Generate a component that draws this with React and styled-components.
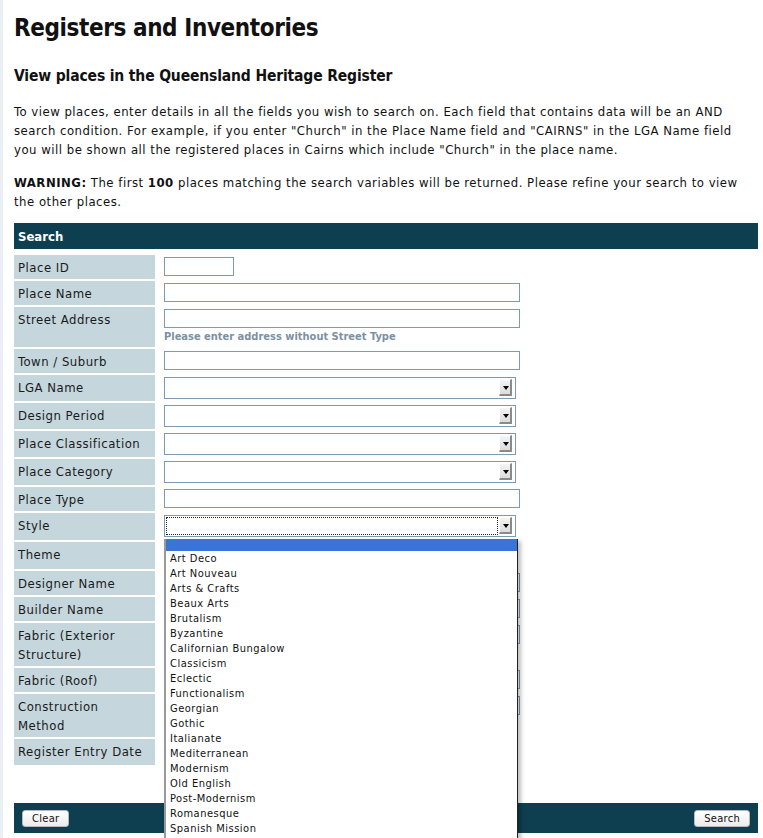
import React from 'react';
import styled, { createGlobalStyle } from 'styled-components';

const GlobalStyle = createGlobalStyle`
  html, body { margin: 0; padding: 0; background: #fff; }
  body {
    font-family: "DejaVu Sans Condensed", "DejaVu Sans", sans-serif;
    color: #111;
  }
`;

const Page = styled.div`
  border-left: 3px solid #e9eff3;
  padding: 12px 5px 6px 11px;
  min-height: 820px;
`;

const Title = styled.h1`
  margin: 0;
  font-size: 24px;
  line-height: 32px;
  font-weight: bold;
  letter-spacing: -0.4px;
`;

const SubTitle = styled.h2`
  margin: 22px 0 0;
  font-size: 15.5px;
  line-height: 20px;
  font-weight: bold;
  letter-spacing: -0.15px;
`;

const Para = styled.p`
  margin: ${p => p.$top}px 0 0;
  font-size: 13px;
  line-height: 19px;
  letter-spacing: 0.5px;
  white-space: nowrap;
`;

const Bar = styled.div`
  margin-top: 12px;
  height: 26px;
  background: #0e3f51;
  color: #fff;
  font-weight: bold;
  font-size: 13px;
  line-height: 27px;
  padding: 0 4px;
`;

const Form = styled.div`
  display: grid;
  grid-template-columns: 141px 1fr;
  row-gap: 2px;
  margin-top: 6px;
`;

const Label = styled.div`
  background: #c5d6dd;
  font-size: 13px;
  line-height: 19px;
  letter-spacing: 0.5px;
  padding: 3px 4px 2px;
  color: #1a1a1a;
  white-space: pre-line;
`;

const Field = styled.div`
  position: relative;
  padding: 2px 9px ${p => p.$pb}px;
`;

const TextBox = styled.input`
  display: block;
  box-sizing: border-box;
  width: ${p => p.$w || 356}px;
  height: ${p => p.$h || 19}px;
  margin: 0;
  border: 1px solid #7d9ab2;
  background: #fff;
  padding: 0 3px;
  font: inherit;
  outline: none;
`;

const SelectBox = styled.div`
  position: relative;
  box-sizing: border-box;
  width: 352px;
  height: 22px;
  border: 1px solid #7d9ab2;
  background: #fff;
  &::after {
    content: "";
    display: ${p => (p.$focus ? 'block' : 'none')};
    position: absolute;
    left: 1px;
    top: 1px;
    right: 17px;
    bottom: 1px;
    border: 1px dotted #222;
  }
`;

const Arrow = styled.span`
  position: absolute;
  right: 3px;
  top: 1px;
  width: 13px;
  height: 17px;
  box-sizing: border-box;
  background: linear-gradient(#f4f4f4, #dcdcdc);
  border-right: 2px solid #8a8a8a;
  border-bottom: 2px solid #8a8a8a;
  border-top: 1px solid #fff;
  border-left: 1px solid #fff;
  &::before {
    content: "";
    position: absolute;
    left: 3px;
    top: 6px;
    border-left: 3px solid transparent;
    border-right: 3px solid transparent;
    border-top: 4px solid #000;
  }
`;

const Hint = styled.div`
  font-size: 11px;
  font-weight: bold;
  line-height: 17px;
  color: #7b91a4;
`;

const ListBox = styled.div`
  position: absolute;
  z-index: 5;
  left: 9px;
  top: 26px;
  width: 351px;
  background: #fff;
  border-left: 2px solid #9a9a9a;
  border-right: 1px solid #222;
  box-shadow: 3px 2px 4px rgba(0, 0, 0, 0.25);
  padding-bottom: 10px;
`;

const Option = styled.div`
  height: ${p => (p.$blank ? 12 : 15)}px;
  line-height: 15px;
  font-size: 11px;
  letter-spacing: 0.5px;
  padding: 0 4px;
  background: ${p => (p.$active ? '#3875d7' : 'transparent')};
  color: #111;
  white-space: nowrap;
`;

const Footer = styled.div`
  margin-top: 38px;
  height: 30px;
  background: #0e3f51;
  display: flex;
  align-items: center;
  justify-content: space-between;
  padding: 0 8px;
`;

const Button = styled.button`
  height: 17px;
  padding: 0 9px;
  border: 1px solid #b8b8b8;
  border-radius: 3px;
  background: linear-gradient(#ffffff, #ececec);
  font-family: "DejaVu Sans Condensed", "DejaVu Sans", sans-serif;
  font-size: 11px;
  letter-spacing: 0.3px;
  line-height: 15px;
  color: #111;
`;

const styles = [
  'Art Deco', 'Art Nouveau', 'Arts & Crafts', 'Beaux Arts', 'Brutalism', 'Byzantine',
  'Californian Bungalow', 'Classicism', 'Eclectic', 'Functionalism', 'Georgian', 'Gothic',
  'Italianate', 'Mediterranean', 'Modernism', 'Old English', 'Post-Modernism', 'Romanesque',
  'Spanish Mission',
];

const rows = [
  { label: 'Place ID', kind: 'text', w: 70 },
  { label: 'Place Name', kind: 'text' },
  { label: 'Street Address', kind: 'text', hint: 'Please enter address without Street Type' },
  { label: 'Town / Suburb', kind: 'text' },
  { label: 'LGA Name', kind: 'select' },
  { label: 'Design Period', kind: 'select' },
  { label: 'Place Classification', kind: 'select' },
  { label: 'Place Category', kind: 'select' },
  { label: 'Place Type', kind: 'text' },
  { label: 'Style', kind: 'select', open: true, pb: 3 },
  { label: 'Theme', kind: 'select', pb: 3 },
  { label: 'Designer Name', kind: 'text' },
  { label: 'Builder Name', kind: 'text' },
  { label: 'Fabric (Exterior\nStructure)', kind: 'text' },
  { label: 'Fabric (Roof)', kind: 'text' },
  { label: 'Construction\nMethod', kind: 'text' },
  { label: 'Register Entry Date', kind: 'text', w: 90, h: 22 },
];

const App = () => {
  return (
    <Page>
      <GlobalStyle />
      <Title>Registers and Inventories</Title>
      <SubTitle>View places in the Queensland Heritage Register</SubTitle>
      <Para $top={16}>
        To view places, enter details in all the fields you wish to search on. Each field that contains data will be an AND<br />
        search condition. For example, if you enter "Church" in the Place Name field and "CAIRNS" in the LGA Name field<br />
        you will be shown all the registered places in Cairns which include "Church" in the place name.
      </Para>
      <Para $top={14}>
        <b>WARNING:</b> The first <b>100</b> places matching the search variables will be returned. Please refine your search to view<br />
        the other places.
      </Para>

      <Bar>Search</Bar>
      <Form>
        {rows.map(r => (
          <React.Fragment key={r.label}>
            <Label>{r.label}</Label>
            <Field $pb={r.pb || 2}>
              {r.kind === 'text' ? (
                <TextBox type="text" $w={r.w} $h={r.h} readOnly />
              ) : (
                <SelectBox $focus={r.open}>
                  <Arrow />
                </SelectBox>
              )}
              {r.hint && <Hint>{r.hint}</Hint>}
              {r.open && (
                <ListBox>
                  <Option $blank $active />
                  {styles.map(s => <Option key={s}>{s}</Option>)}
                </ListBox>
              )}
            </Field>
          </React.Fragment>
        ))}
      </Form>
      <Footer>
        <Button>Clear</Button>
        <Button>Search</Button>
      </Footer>
    </Page>
  );
};

export default App;
